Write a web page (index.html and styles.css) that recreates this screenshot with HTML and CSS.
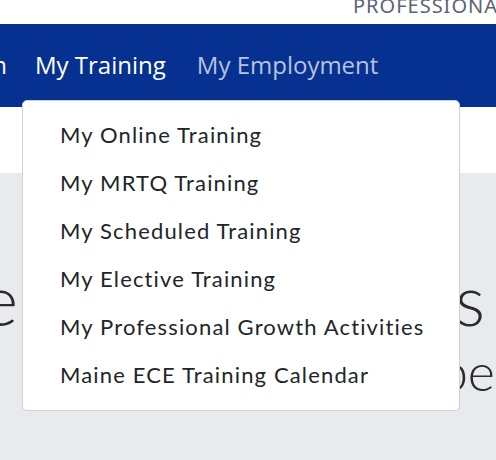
FILE: index.html
```html
<!DOCTYPE html>
<html lang="en">
<head>
<meta charset="utf-8">
<title>My Training</title>
<link rel="stylesheet" href="styles.css">
</head>
<body>
<header class="topbar">
  <span class="brand-sub">PROFESSIONAL</span>
</header>
<nav class="mainnav">
  <ul class="nav-list">
    <li class="nav-item nav-clip"><span class="nav-link">My Registration</span></li>
    <li class="nav-item nav-active">
      <span class="nav-link">My Training</span>
      <div class="dropdown">
        <a class="dropdown-item" href="#">My Online Training</a>
        <a class="dropdown-item" href="#">My MRTQ Training</a>
        <a class="dropdown-item" href="#">My Scheduled Training</a>
        <a class="dropdown-item" href="#">My Elective Training</a>
        <a class="dropdown-item" href="#">My Professional Growth Activities</a>
        <a class="dropdown-item" href="#">Maine ECE Training Calendar</a>
      </div>
    </li>
    <li class="nav-item nav-last"><span class="nav-link">My Employment</span></li>
  </ul>
</nav>
<div class="subbar"></div>
<section class="hero">
  <div class="hero-line line-one">
    <span class="hero-left">Welcome</span>
    <span class="hero-right">Trainings</span>
  </div>
  <div class="hero-line line-two">
    <span class="hero-tail">Career Landscape</span>
  </div>
</section>
</body>
</html>
```

FILE: styles.css
```css
* { box-sizing: border-box; }
html, body { margin: 0; padding: 0; }
body {
  width: 496px;
  height: 460px;
  overflow: hidden;
  background: #e9eaee;
  font-family: "Open Sans", "Liberation Sans", sans-serif;
}
.topbar {
  height: 24px;
  background: #fff;
  display: flex;
  align-items: flex-end;
  padding-left: 353px;
  overflow: hidden;
}
.brand-sub {
  font-family: "Noto Sans", "Liberation Sans", sans-serif;
  font-size: 20px;
  line-height: 1;
  color: #5a6374;
  letter-spacing: 1px;
  white-space: nowrap;
  margin-bottom: 8px;
}
.mainnav {
  height: 83px;
  background: #063190;
}
.nav-list {
  list-style: none;
  margin: 0;
  padding: 0;
  height: 100%;
  display: flex;
}
.nav-item {
  position: relative;
  display: flex;
  align-items: center;
  padding: 0 14px;
  height: 100%;
  white-space: nowrap;
}
.nav-clip {
  width: 21px;
  padding-left: 0;
  justify-content: flex-end;
}
.nav-active {
  padding-right: 15px;
}
.nav-last {
  padding-left: 16px;
}
.nav-link {
  font-size: 24px;
  color: #b7c2df;
  padding-bottom: 2px;
}
.nav-clip .nav-link,
.nav-active .nav-link {
  color: #ffffff;
}
.dropdown {
  position: absolute;
  top: 76px;
  left: 1px;
  width: 438px;
  background: #fff;
  border: 1px solid #cfd1d4;
  border-radius: 5px;
  padding: 10px 0 11px;
  display: flex;
  flex-direction: column;
  z-index: 5;
}
.dropdown-item {
  display: block;
  height: 48px;
  line-height: 48px;
  padding-left: 37px;
  font-family: "Lato", "Noto Sans", sans-serif;
  font-size: 22px;
  letter-spacing: 1.15px;
  color: #212529;
  text-decoration: none;
  white-space: nowrap;
}
.subbar {
  height: 66px;
  background: #fff;
}
.hero {
  height: 287px;
  background: #e9eaee;
  padding-top: 86px;
  overflow: hidden;
  font-family: "Lato", "Noto Sans", sans-serif;
  font-weight: 300;
  color: #2b2b2b;
}
.hero-line {
  display: flex;
  white-space: nowrap;
}
.line-one {
  font-size: 70px;
  line-height: 80px;
  justify-content: space-between;
  padding-right: 11px;
}
.hero-left {
  width: 18px;
  display: flex;
  justify-content: flex-end;
}
.line-two {
  font-size: 52px;
  line-height: 64px;
  justify-content: flex-end;
  padding-right: 1px;
}
```
